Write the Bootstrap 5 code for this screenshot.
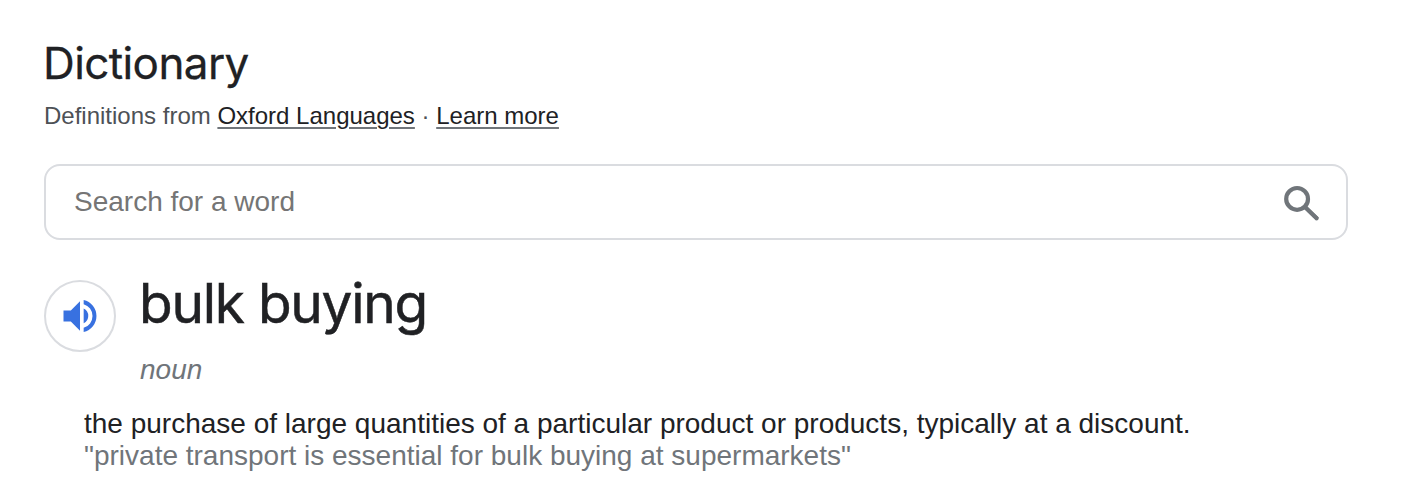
<!DOCTYPE html>
<html lang="en">
<head>
<meta charset="utf-8">
<meta name="viewport" content="width=device-width, initial-scale=1">
<title>Dictionary</title>
<link href="https://cdn.jsdelivr.net/npm/bootstrap@5.3.0/dist/css/bootstrap.min.css" rel="stylesheet">
<style>
body { font-family: "Liberation Sans", Arial, sans-serif; color: #202124; background: #fff; overflow: hidden; }
.dict { padding: 37px 70px 0 44px; }
.dict-title { font: 400 44px/52px Inter, sans-serif; letter-spacing: -.6px; text-indent: -1px; -webkit-text-stroke: .3px; }
.dict-source { font-size: 24px; line-height: 30px; margin-top: 12px; color: #4d5156; }
.dict-source a { color: #202124; text-decoration-color: #70757a; text-decoration-thickness: 2px; text-underline-offset: 3px; }
.search-box { height: 76px; margin-top: 33px; border: 2px solid #dadce0; border-radius: 16px; padding: 4px 20px 0 28px; }
.search-box input { font-size: 28px; line-height: 32px; color: #202124; margin-top: -4px; }
.search-box input::placeholder { color: #757575; opacity: 1; }
.speaker { width: 72px; height: 72px; border: 2px solid #dadce0; margin-top: 7px; }
.entry { margin-top: 33px; gap: 24px; }
.headword { font: 400 55px/60px Inter, sans-serif; letter-spacing: -1.25px; text-indent: -1px; -webkit-text-stroke: .5px; }
.word-class { font-size: 28px; line-height: 32px; margin-top: 21px; color: #70757a; }
.sense { margin: 22px 0 0 40px; font-size: 28px; line-height: 32px; }
.example { color: #70757a; }
</style>
</head>
<body>
<main class="dict">
  <h1 class="dict-title mb-0">Dictionary</h1>
  <p class="dict-source mb-0">Definitions from <a href="#">Oxford Languages</a> · <a href="#">Learn more</a></p>
  <form class="search-box d-flex align-items-center">
    <input class="form-control border-0 p-0 shadow-none" type="text" placeholder="Search for a word">
    <button class="btn p-0 border-0 d-flex" type="button" aria-label="Search"><svg width="48" height="48" viewBox="0 0 48 48" fill="none" stroke="#70757a" stroke-width="4.2"><circle cx="19.1" cy="18.9" r="10.9"/><path d="M27 27l12.4 12"/><path d="M28 28l10.8 10.4" stroke-width="3.8" stroke-linecap="round"/></svg></button>
  </form>
  <section class="entry d-flex align-items-start">
    <button class="speaker btn rounded-circle p-0 d-flex align-items-center justify-content-center flex-shrink-0" type="button" aria-label="Listen"><svg width="44" height="44" viewBox="0 0 24 24" fill="#3871e0"><path d="M3 9v6h4l5 5V4L7 9H3zm13.5 3A4.5 4.5 0 0 0 14 7.97v8.05A4.47 4.47 0 0 0 16.5 12zM14 3.23v2.3a6.75 6.75 0 0 1 0 12.94v2.3a9 9 0 0 0 0-17.54z"/></svg></button>
    <div><h2 class="headword mb-0">bulk buying</h2><div class="word-class fst-italic">noun</div></div>
  </section>
  <div class="sense"><div>the purchase of large quantities of a particular product or products, typically at a discount.</div><div class="example">"private transport is essential for bulk buying at supermarkets"</div></div>
</main>
<script src="https://cdn.jsdelivr.net/npm/bootstrap@5.3.0/dist/js/bootstrap.bundle.min.js"></script>
</body>
</html>
